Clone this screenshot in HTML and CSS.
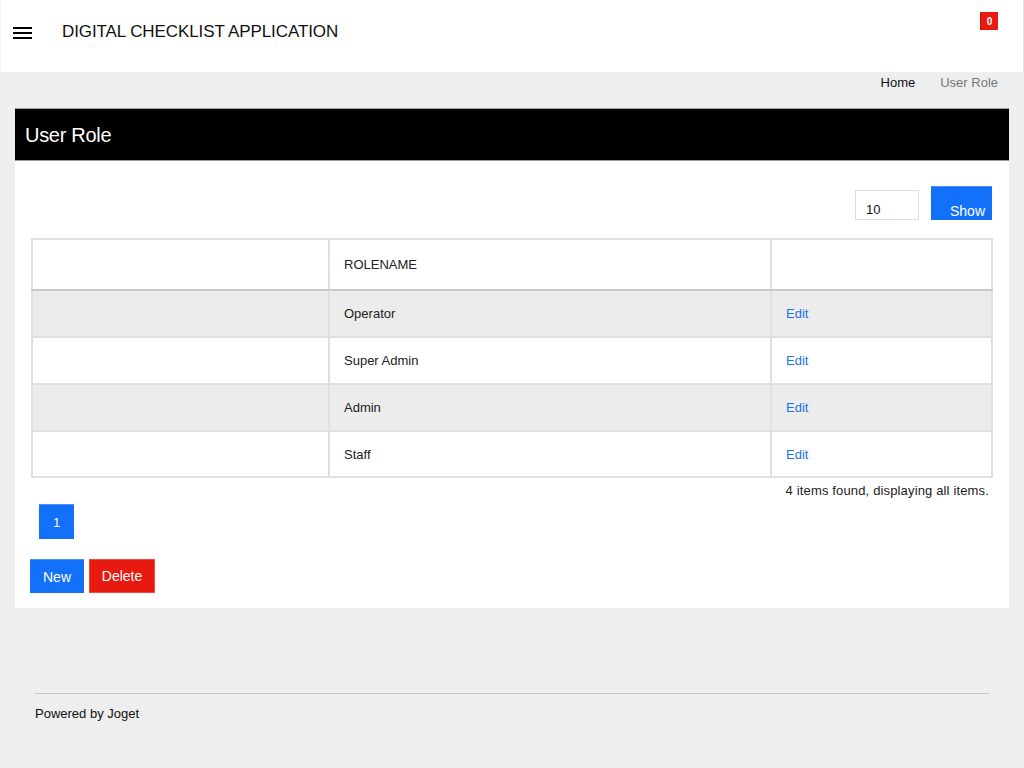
FILE: index.html
```html
<!DOCTYPE html>
<html>
<head>
<meta charset="utf-8">
<link rel="stylesheet" href="styles.css">
</head>
<body>
<header class="topbar">
  <div class="brand">
    <svg class="burger" width="20" height="14" viewBox="0 0 20 14"><rect x="0" y="1" width="19" height="2" fill="#000"/><rect x="0" y="6" width="19" height="2" fill="#000"/><rect x="0" y="11" width="19" height="2" fill="#000"/></svg>
    <span class="title">DIGITAL CHECKLIST APPLICATION</span>
  </div>
  <span class="badge">0</span>
</header>
<nav class="crumbs">
  <a class="crumb">Home</a>
  <span class="crumb current">User Role</span>
</nav>
<main class="panel">
  <h1 class="panel-head">User Role</h1>
  <div class="panel-body">
    <div class="toolbar">
      <input class="pagesize" type="text" value="10">
      <button class="btn btn-blue show">Show</button>
    </div>
    <table class="grid">
      <thead>
        <tr><th class="c1"></th><th class="c2">ROLENAME</th><th class="c3"></th></tr>
      </thead>
      <tbody>
        <tr class="odd"><td></td><td>Operator</td><td><a class="edit">Edit</a></td></tr>
        <tr><td></td><td>Super Admin</td><td><a class="edit">Edit</a></td></tr>
        <tr class="odd"><td></td><td>Admin</td><td><a class="edit">Edit</a></td></tr>
        <tr class="last"><td></td><td>Staff</td><td><a class="edit">Edit</a></td></tr>
      </tbody>
    </table>
    <div class="found">4 items found, displaying all items.</div>
    <div class="pager"><span class="page">1</span></div>
    <div class="actions">
      <button class="btn btn-blue">New</button>
      <button class="btn btn-red">Delete</button>
    </div>
  </div>
</main>
<footer class="footer">
  <div class="footer-line">Powered by Joget</div>
</footer>
</body>
</html>
```
FILE: styles.css
```css
* { box-sizing: border-box; }
body {
  margin: 0;
  background: #eeeeee;
  font-family: "Liberation Sans", Arial, Helvetica, sans-serif;
  color: #222;
  height: 768px;
}
.topbar {
  height: 72px;
  background: #fff;
  display: flex;
  justify-content: space-between;
  align-items: flex-start;
  border-left: 1px solid #f4f4f4;
  border-right: 1px solid #e4e4e4;
}
.brand {
  display: flex;
  align-items: center;
  height: 64px;
  padding-left: 12px;
}
.burger { display: block; margin-top: 2px; }
.title {
  margin-left: 29px;
  font-size: 17px;
  color: #111;
  letter-spacing: -0.1px;
}
.badge {
  margin: 12px 25px 0 0;
  width: 18px;
  height: 18px;
  background: #e8190f;
  color: #fff;
  font-size: 10px;
  font-weight: bold;
  display: flex;
  align-items: center;
  justify-content: center;
  border-left: 1px solid #c41208;
}
.crumbs {
  height: 36px;
  display: flex;
  justify-content: flex-end;
  align-items: flex-start;
  gap: 25px;
  padding: 3px 26px 0 0;
  font-size: 13px;
}
.crumb { color: #111; }
.crumb.current { color: #777; }
.panel {
  margin: 0 15px;
  background: #fff;
}
.panel-head {
  margin: 0;
  height: 53px;
  background: #000;
  color: #fff;
  font-size: 20px;
  font-weight: normal;
  display: flex;
  align-items: center;
  padding: 1px 10px 0 10px;
  border-top: 1px solid #999;
  border-bottom: 1px solid #999;
  letter-spacing: -0.3px;
}
.panel-body {
  padding: 25px 16px 15px 16px;
}
.toolbar {
  display: flex;
  justify-content: flex-end;
  align-items: flex-end;
  gap: 12px;
  padding-right: 1px;
  height: 34px;
}
.pagesize {
  width: 64px;
  height: 30px;
  border: 1px solid #ddd;
  font-family: inherit;
  font-size: 13px;
  padding: 8px 0 0 10px;
  color: #111;
  outline: none;
}
.btn {
  border: none;
  font-family: inherit;
  font-size: 14px;
  color: #fff;
  cursor: pointer;
  padding: 0;
}
.btn-blue { background: #1370f8; border-top: 1px solid #4a90f7; }
.btn-red { background: #e8190f; border: 1px solid #f04a3f; }
.show {
  width: 61px;
  height: 34px;
  padding-top: 15px;
  padding-left: 12px;
  line-height: 16px;
}
.grid {
  margin-top: 18px;
  width: 100%;
  border-collapse: collapse;
  border: 1px solid #ddd;
  font-size: 13px;
}
.grid th, .grid td {
  border: 2px solid #e0e0e0;
  text-align: left;
  padding: 0 0 0 14px;
  font-weight: normal;
  color: #222;
}
.grid th {
  height: 51px;
  border-bottom: 2px solid #c8c8c8;
}
.grid td { height: 47px; }
.grid tr.last td { height: 46px; }
.c1 { width: 297px; }
.c2 { width: 442px; }
.grid tr.odd td { background: #ececec; }
.edit { color: #1a73e8; }
.found {
  text-align: right;
  font-size: 13px;
  padding: 5px 4px 0 0;
  height: 20px;
  line-height: 15px;
  letter-spacing: 0.15px;
}
.pager {
  padding: 6px 0 0 8px;
}
.page {
  display: flex;
  align-items: center;
  justify-content: center;
  width: 35px;
  height: 35px;
  background: #1370f8;
  color: #fff;
  font-size: 13px;
  border-top: 1px solid #4a90f7;
}
.actions {
  display: flex;
  gap: 5px;
  margin-top: 20px;
  margin-left: -1px;
}
.actions .btn { height: 34px; }
.actions .btn-blue { width: 54px; }
.actions .btn-red { width: 66px; }
.footer {
  padding: 85px 35px 0 35px;
}
.footer-line {
  border-top: 1px solid #c8c8c8;
  padding-top: 12px;
  font-size: 13px;
  color: #111;
}
```
